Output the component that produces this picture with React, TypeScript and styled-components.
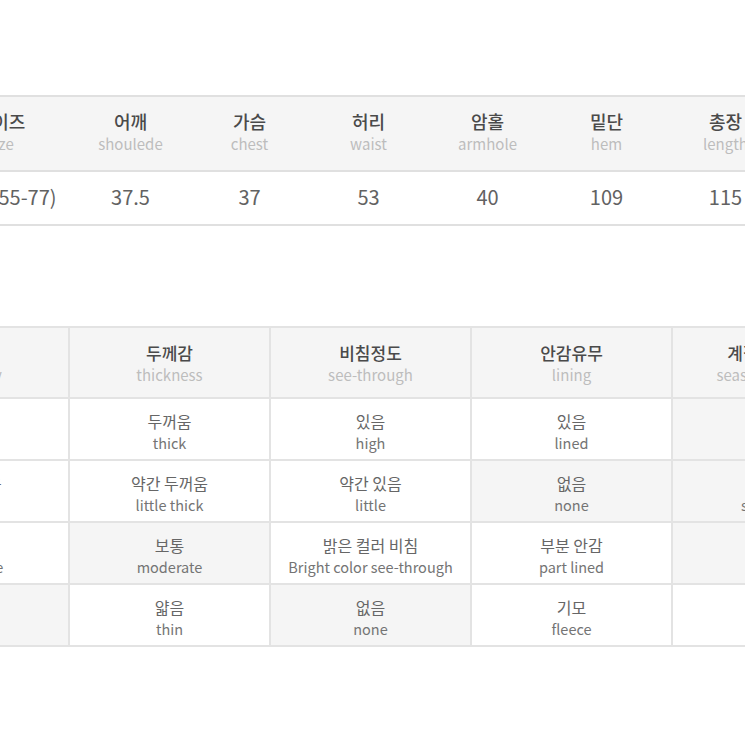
import React from 'react';
import styled, { createGlobalStyle } from 'styled-components';

const GlobalStyle = createGlobalStyle`
  html, body {
    margin: 0;
    padding: 0;
    background: #fff;
  }
  body {
    font-family: 'Noto Sans CJK KR', 'Noto Sans', sans-serif;
  }
`;

const Page = styled.div`
  width: 745px;
  height: 745px;
  overflow: hidden;
  padding-top: 95px;
  box-sizing: border-box;
`;

const SizeTable = styled.div`
  display: grid;
  grid-template-columns: 141px repeat(6, 119px);
  margin-left: -70px;
  width: max-content;
  border-top: 2px solid #e0e0e0;
  border-bottom: 2px solid #e0e0e0;
`;

const SizeHead = styled.div`
  height: 75px;
  background: #f5f5f5;
  border-bottom: 2px solid #e0e0e0;
  display: flex;
  flex-direction: column;
  align-items: center;
  justify-content: center;
  white-space: nowrap;
  padding-bottom: 4px;
  box-sizing: border-box;
`;

const HeadKo = styled.div`
  font-size: 18px;
  font-weight: 500;
  color: #4a4a4a;
  line-height: 23px;
`;

const HeadEn = styled.div`
  font-size: 15px;
  color: #bdbdbd;
  line-height: 21px;
`;

const SizeValue = styled.div`
  height: 52px;
  display: flex;
  align-items: center;
  justify-content: center;
  font-size: 20px;
  color: #626262;
  white-space: nowrap;
  padding-bottom: 4px;
  box-sizing: border-box;
`;

const InfoTable = styled.div<{ $cols: string }>`
  display: grid;
  grid-template-columns: ${(p) => p.$cols};
  margin-left: -127px;
  margin-top: 100px;
  width: max-content;
  border-top: 2px solid #e3e3e3;
`;

const InfoCell = styled.div<{ $on?: boolean; $head?: boolean }>`
  height: ${(p) => (p.$head ? '71px' : '62px')};
  background: ${(p) => (p.$on || p.$head ? '#f5f5f5' : '#fff')};
  border-right: 2px solid #e3e3e3;
  border-bottom: 2px solid #e3e3e3;
  display: flex;
  flex-direction: column;
  align-items: center;
  justify-content: center;
  white-space: nowrap;
  padding-top: ${(p) => (p.$head ? '1px' : '5px')};
  box-sizing: border-box;
`;

const InfoHeadKo = styled.div`
  font-size: 17px;
  font-weight: 500;
  color: #4a4a4a;
  line-height: 23px;
`;

const InfoKo = styled.div`
  font-size: 16px;
  color: #666;
  line-height: 22px;
`;

const InfoEn = styled.div`
  font-size: 14.5px;
  color: #747474;
  line-height: 22px;
`;

const sizeCols = [
  { ko: '사이즈', en: 'size', value: 'FREE(55-77)' },
  { ko: '어깨', en: 'shoulede', value: '37.5' },
  { ko: '가슴', en: 'chest', value: '37' },
  { ko: '허리', en: 'waist', value: '53' },
  { ko: '암홀', en: 'armhole', value: '40' },
  { ko: '밑단', en: 'hem', value: '109' },
  { ko: '총장', en: 'length', value: '115' },
];

type Opt = { ko: string; en: string };

// gray cells mark the option that applies to this item
const infoCols: { ko: string; en: string; rows: Opt[]; on: number[] }[] = [
  {
    ko: '신축성',
    en: 'elasticity',
    rows: [
      { ko: '좋음', en: 'good' },
      { ko: '약간 있음', en: 'little' },
      { ko: '보통', en: 'moderate' },
      { ko: '없음', en: 'none' },
    ],
    on: [3],
  },
  {
    ko: '두께감',
    en: 'thickness',
    rows: [
      { ko: '두꺼움', en: 'thick' },
      { ko: '약간 두꺼움', en: 'little thick' },
      { ko: '보통', en: 'moderate' },
      { ko: '얇음', en: 'thin' },
    ],
    on: [2],
  },
  {
    ko: '비침정도',
    en: 'see-through',
    rows: [
      { ko: '있음', en: 'high' },
      { ko: '약간 있음', en: 'little' },
      { ko: '밝은 컬러 비침', en: 'Bright color see-through' },
      { ko: '없음', en: 'none' },
    ],
    on: [3],
  },
  {
    ko: '안감유무',
    en: 'lining',
    rows: [
      { ko: '있음', en: 'lined' },
      { ko: '없음', en: 'none' },
      { ko: '부분 안감', en: 'part lined' },
      { ko: '기모', en: 'fleece' },
    ],
    on: [1],
  },
  {
    ko: '계절감(시즌)',
    en: 'seasonal feeling',
    rows: [
      { ko: '봄', en: 'spring' },
      { ko: '여름', en: 'summers' },
      { ko: '가을', en: 'fall' },
      { ko: '겨울', en: 'winter' },
    ],
    on: [0, 1, 2],
  },
];

const App = () => {
  const cells: React.ReactNode[] = [];
  infoCols.forEach((c, i) =>
    cells.push(
      <InfoCell key={`h${i}`} $head>
        <InfoHeadKo>{c.ko}</InfoHeadKo>
        <HeadEn>{c.en}</HeadEn>
      </InfoCell>
    )
  );
  for (let r = 0; r < 4; r++) {
    infoCols.forEach((c, i) =>
      cells.push(
        <InfoCell key={`${r}-${i}`} $on={c.on.includes(r)}>
          <InfoKo>{c.rows[r].ko}</InfoKo>
          <InfoEn>{c.rows[r].en}</InfoEn>
        </InfoCell>
      )
    );
  }

  return (
    <Page>
      <GlobalStyle />
      <SizeTable>
        {sizeCols.map((c) => (
          <SizeHead key={c.ko}>
            <HeadKo>{c.ko}</HeadKo>
            <HeadEn>{c.en}</HeadEn>
          </SizeHead>
        ))}
        {sizeCols.map((c) => (
          <SizeValue key={c.ko}>{c.value}</SizeValue>
        ))}
      </SizeTable>
      <InfoTable $cols="197px 201px 201px 201px 201px">{cells}</InfoTable>
    </Page>
  );
};

export default App;
